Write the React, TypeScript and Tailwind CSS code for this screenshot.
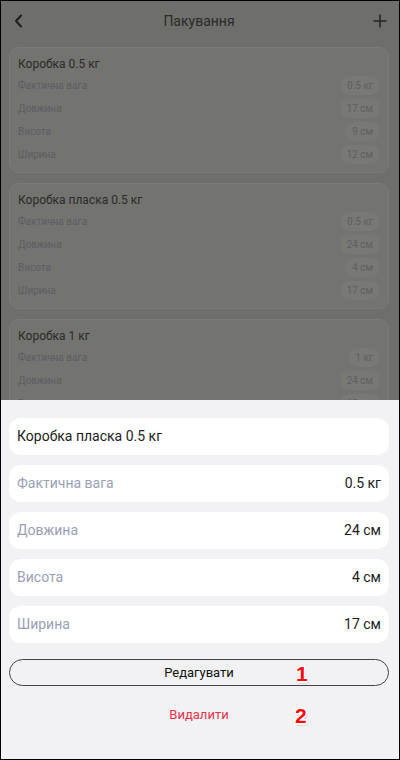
import React from "react";

interface Box {
    name: string;
    weight: string;
    length: string;
    height: string;
    width: string;
}

const boxes: Box[] = [
    { name: "Коробка 0.5 кг", weight: "0.5 кг", length: "17 см", height: "9 см", width: "12 см" },
    { name: "Коробка пласка 0.5 кг", weight: "0.5 кг", length: "24 см", height: "4 см", width: "17 см" },
    { name: "Коробка 1 кг", weight: "1 кг", length: "24 см", height: "10 см", width: "17 см" },
];

const font = { fontFamily: "Roboto, 'Noto Sans', sans-serif" };

const DimRow: React.FC<{ label: string; value: string }> = ({ label, value }) => (
    <div className="flex h-[23px] items-center justify-between">
        <span className="text-[10px] text-[#5c5e63]">{label}</span>
        <span className="rounded-full bg-[#787875] px-[7px] py-[3px] text-[10px] leading-[13px] text-[#5f5f5e]">{value}</span>
    </div>
);

const BoxCard: React.FC<{ box: Box }> = ({ box }) => (
    <div className="rounded-[10px] border border-[#7a7a77] bg-[#737370] px-[8px] pb-[6px] pt-[6px]">
        <div className="flex h-[20px] items-center text-[12px] text-[#2b2b29]">{box.name}</div>
        <DimRow label="Фактична вага" value={box.weight} />
        <DimRow label="Довжина" value={box.length} />
        <DimRow label="Висота" value={box.height} />
        <DimRow label="Ширина" value={box.width} />
    </div>
);

const SheetRow: React.FC<{ label: string; value?: string }> = ({ label, value }) => (
    <div className="flex h-[37px] items-center justify-between rounded-[12px] bg-white px-[8px]">
        <span className={value ? "text-[14px] text-[#9aa1b6]" : "text-[14px] text-[#1c1c1c]"}>{label}</span>
        {value && <span className="text-[14px] text-[#1c1c1c]">{value}</span>}
    </div>
);

const Marker: React.FC<{ n: string; className: string }> = ({ n, className }) => (
    <span
        className={`absolute text-[21px] font-bold leading-none text-[#ff0a0a] ${className}`}
        style={{
            fontFamily: "'Liberation Sans', Arial, sans-serif",
            textShadow:
                "1.5px 0 0 #fff, -1.5px 0 0 #fff, 0 1.5px 0 #fff, 0 -1.5px 0 #fff, 1px 1px 0 #fff, -1px -1px 0 #fff, 1px -1px 0 #fff, -1px 1px 0 #fff, 1px 2px 2px rgba(0,0,0,0.3)",
        }}
    >
        {n}
    </span>
);

export default function App() {
    return (
        <div className="relative h-[760px] w-[400px] overflow-hidden border border-black bg-[#6e6e6b]" style={font}>
            {/* screen behind the sheet */}
            <div className="h-[399px] overflow-hidden">
                <header className="flex h-[40px] items-center justify-between pl-[12px] pr-[12px]">
                    <svg width="12" height="14" viewBox="0 0 12 14" fill="none" stroke="#1e1e1d" strokeWidth="2" strokeLinecap="round" strokeLinejoin="round">
                        <path d="M8 1.5 L3 7 L8 12.5" />
                    </svg>
                    <span className="text-[14px] text-[#2b2b29]">Пакування</span>
                    <svg width="14" height="14" viewBox="0 0 14 14" fill="none" stroke="#252524" strokeWidth="1.6">
                        <path d="M7 0.5 V13.5 M0.5 7 H13.5" />
                    </svg>
                </header>

                <div className="ml-[8px] mr-[10px] mt-[6px] flex flex-col gap-[10px]">
                    {boxes.map((b) => (
                        <BoxCard key={b.name} box={b} />
                    ))}
                </div>
            </div>

            <div className="h-[359px] bg-[#f2f2f4] pl-[8px] pr-[10px] pt-[18px]">
                <div className="flex flex-col gap-[10px]">
                    <SheetRow label="Коробка пласка 0.5 кг" />
                    <SheetRow label="Фактична вага" value="0.5 кг" />
                    <SheetRow label="Довжина" value="24 см" />
                    <SheetRow label="Висота" value="4 см" />
                    <SheetRow label="Ширина" value="17 см" />
                </div>
                <button className="mt-[16px] flex h-[27px] w-full items-center justify-center rounded-full border-[1.5px] border-[#444] text-[13px] text-[#111]">
                    Редагувати
                </button>
                <div className="mt-[16px] flex h-[26px] items-center justify-center text-[13px] text-[#e8344b]">Видалити</div>
            </div>

            <Marker n="1" className="left-[295px] top-[662px]" />
            <Marker n="2" className="left-[294px] top-[704px]" />
        </div>
    );
}
